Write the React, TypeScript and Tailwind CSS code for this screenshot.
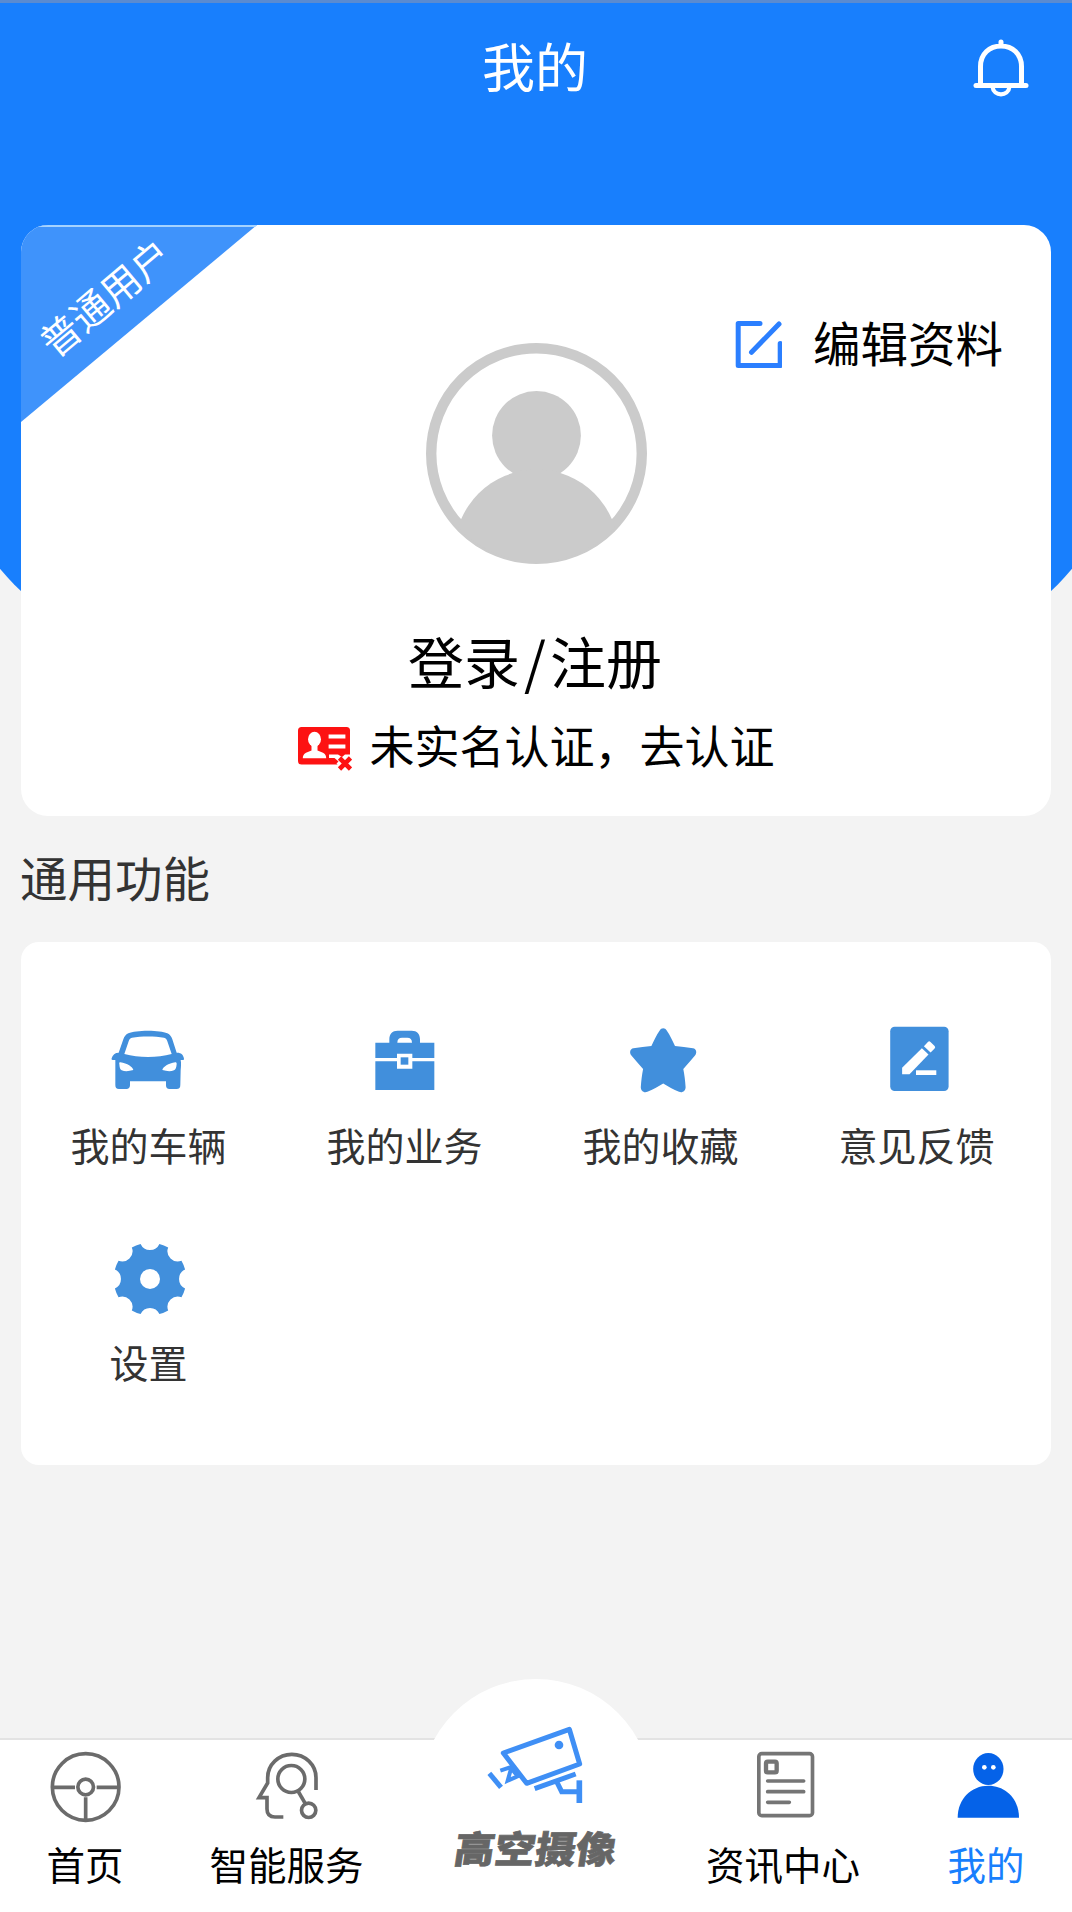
import React from 'react';

const TOOTH_COUNT = 8;

// Gear outline: short outer arcs joined by concave notches
function gearPath(cx: number, cy: number, r: number, notch: number) {
    const point = (deg: number) => {
        const rad = (deg * Math.PI) / 180;
        return `${(cx + r * Math.sin(rad)).toFixed(2)} ${(cy - r * Math.cos(rad)).toFixed(2)}`;
    };
    let d = `M${point(-15)}`;
    for (let i = 0; i < TOOTH_COUNT; i++) {
        const a = i * 45;
        d += ` A${notch} ${notch} 0 0 0 ${point(a + 15)} A${r} ${r} 0 0 1 ${point(a + 30)}`;
    }
    return `${d}Z`;
}

function BellIcon() {
    return (
        <svg className="h-[58px] w-[56px]" viewBox="0 0 56 58" fill="none" stroke="white" strokeWidth="5" strokeLinecap="round">
            <path d="M28 3v4M7.500 46V27.500C7.500 15 16.500 7 28 7s20.500 8 20.500 20.500V46" />
            <path d="M3 46.500h50" />
            <path d="M19.500 47.500c1 10.500 16 10.500 17 0" strokeWidth="4.200" />
        </svg>
    );
}

function EditIcon() {
    return (
        <svg className="h-12 w-[47px]" viewBox="0 0 47 48" fill="none" stroke="#2b7fff" strokeWidth="5" strokeLinecap="round" strokeLinejoin="round">
            <path d="M25 3.500H3.200v42h42V23.500" />
            <path d="M44 4L16.500 32.300" />
        </svg>
    );
}

function Avatar() {
    return (
        <svg className="h-[221px] w-[221px]" viewBox="0 0 221 221">
            <defs>
                <clipPath id="avatar-clip">
                    <circle cx="110.500" cy="110.500" r="108" />
                </clipPath>
            </defs>
            <circle cx="110.500" cy="110.500" r="105.300" fill="none" stroke="#cbcbcb" strokeWidth="10.400" />
            <circle cx="110.500" cy="92.500" r="44.400" fill="#cbcbcb" />
            <circle cx="110.500" cy="208.500" r="82" fill="#cbcbcb" clipPath="url(#avatar-clip)" />
        </svg>
    );
}

function IdCardIcon() {
    return (
        <svg className="h-11 w-[54px]" viewBox="0 0 54 44">
            <rect x="0" y="0" width="52" height="37.500" rx="3.500" fill="#fd1212" />
            <ellipse cx="16.500" cy="12.300" rx="6.500" ry="7.500" fill="white" />
            <path d="M13.500 17h6v6.500l5.500 2.200c2.300 1 3.200 3 3.200 5.600H4.800c0-2.600 1-4.600 3.200-5.600l5.500-2.200z" fill="white" />
            <path d="M30.600 9.500h16.800M30.600 19.500h16.800" stroke="white" strokeWidth="4" />
            <path d="M31 27.500h9l4 2.500 3-2.500h7v12H41l-2.500-3 2-2-4-3.500h-5.500z" fill="white" />
            <path d="M41.500 31l11 11M52.500 31l-11 11" stroke="#fd1212" strokeWidth="4.600" />
        </svg>
    );
}

function CarIcon() {
    return (
        <svg className="h-[72px] w-[72px] overflow-visible" viewBox="159 72 216 216" fill="#418fdc" fillRule="evenodd">
            <path d="M264 92c26 0 46 3 58 8 8 4 12 10 15 18l13 40c12-1 20 5 22 18 0 3-1 4-4 4h-6c2 10 1 20 0 30l-1 44c0 9-3 13-12 13h-20c-8 0-11-4-11-11v-12H210v12c0 7-4 11-11 11h-22c-8 0-11-4-11-12V180h-8c-3 0-4-2-3-5 3-11 10-17 21-17l14-40c3-8 7-14 15-18 12-5 33-8 59-8zM216 113c-6 2-8 5-10 11l-13 38c22 6 46 9 71 9s49-3 71-9l-13-38c-2-6-4-9-10-11-27-5-69-5-96 0zM181 187c-3 0-4 2-3 5 1 11 2 17 7 19 10 4 22 3 35-1-2-9-18-20-39-23zM346 187c3 0 4 2 4 5-1 11-3 17-8 19-10 4-22 3-35-1 2-9 18-20 39-23z" />
        </svg>
    );
}

function BriefcaseIcon() {
    return (
        <svg className="h-[72px] w-[72px] overflow-visible" viewBox="927 72 216 216" fill="#418fdc">
            <path fillRule="evenodd" d="M946 128h42v-10c0-16 9-26 25-26h42c16 0 25 10 25 26v10h43v46h-66v-13h-46v13h-65zM1012 128h44c0-10-5-15-14-15h-16c-9 0-14 5-14 15z" />
            <path d="M946 184h65v22h46v-22h66v86H946z" />
            <rect x="1022" y="172" width="23" height="22" />
        </svg>
    );
}

function StarIcon() {
    return (
        <svg className="h-[72px] w-[72px] overflow-visible" viewBox="0 0 72 72" fill="#418fdc">
            <path d="M34.700 6.500c1.600-3 5.400-3 7 0 3.200 4.700 5.800 9.900 8.300 15.600 5.900.5 11.800 1.300 18 2.200 3.300.6 4.300 4.500 2 7.200-3.800 4.700-7.700 9-11.700 13.500 1.200 5.800 1.900 12 2.300 18.200 0 3.800-3.400 6-6.600 4.500-5.600-2.200-10.700-5-15.800-8.200-5.100 3.200-10.200 6-15.800 8.200-3.200 1.500-6.600-.7-6.600-4.500.4-6.200 1.100-12.400 2.300-18.200-4-4.500-7.900-8.800-11.700-13.500-2.300-2.700-1.300-6.600 2-7.200 6.200-.9 12.100-1.700 18-2.200 2.500-5.700 5.100-10.900 8.300-15.600z" />
        </svg>
    );
}

function FeedbackIcon() {
    return (
        <svg className="h-[72px] w-[72px]" viewBox="0 0 72 72">
            <rect x="9.200" y="2.700" width="58.400" height="64.300" rx="4.500" fill="#418fdc" />
            <path d="M21.100 43.800L40.900 24.200 47.500 30.500 28.500 50.300H21.100z" fill="white" />
            <path d="M42.900 22.200L46.900 18q1.300-1.300 2.600 0L53.600 22q1.200 1.300 0 2.600L49.600 28.600z" fill="white" />
            <rect x="35" y="46.300" width="20.300" height="4.700" fill="white" />
        </svg>
    );
}

function GearIcon() {
    return (
        <svg className="h-[72px] w-[72px] overflow-visible" viewBox="159 723 216 216">
            <path d={gearPath(270, 837, 109, 31)} fill="#418fdc" />
            <circle cx="270" cy="837" r="30" fill="white" />
        </svg>
    );
}

function WheelIcon() {
    return (
        <svg className="h-[72px] w-[72px]" viewBox="147 241 216 216" fill="none" stroke="#6b6b6b" strokeWidth="11">
            <circle cx="257" cy="349" r="100" />
            <circle cx="257" cy="349" r="23.500" />
            <path d="M158 350h67M290 350h67M257 380v69" />
        </svg>
    );
}

function HeadIcon() {
    return (
        <svg className="h-[72px] w-[72px]" viewBox="752 241 216 216" fill="none" stroke="#6b6b6b" strokeWidth="11">
            <path d="M849 439h-25q-24 0-24-24v-34h-24l26-44v-16a72.500 70 0 0 1 145 0v37" />
            <circle cx="873" cy="325" r="40.500" />
            <circle cx="925" cy="419" r="21.500" />
            <path d="M893 361l22 38" />
        </svg>
    );
}

function NewsIcon() {
    return (
        <svg className="h-[72px] w-[72px]" viewBox="201 241 216 216" fill="none" stroke="#757575" strokeWidth="11">
            <rect x="236.500" y="249" width="161" height="186" rx="9" />
            <rect x="258" y="273" width="32" height="32" rx="5" strokeWidth="13" />
            <path d="M263 331h108M263 363h108M263 395h65" strokeLinecap="round" />
        </svg>
    );
}

function MeIcon() {
    return (
        <svg className="h-[72px] w-[72px]" viewBox="810 241 216 216" fill="#0562e8">
            <ellipse cx="925" cy="295" rx="45.500" ry="48" />
            <path d="M833 441c0-56 40-96 92-96s92 40 92 96z" />
            <circle cx="913" cy="290" r="7" fill="white" />
            <circle cx="940" cy="290" r="7" fill="white" />
        </svg>
    );
}

function CameraIcon() {
    return (
        <svg className="h-[80px] w-[100px]" viewBox="258 164 300 240" fill="none" stroke="#3f8ff5" strokeWidth="15">
            <path d="M310 248L508 177l31 104-159 58z" strokeLinejoin="round" />
            <circle cx="477" cy="224" r="13" fill="#3f8ff5" stroke="none" />
            <path d="M404 355l123-44M470 334l15 30h53" />
            <path d="M538 330v68" strokeWidth="17" />
            <path d="M268 309l35 42" />
            <path d="M301 301l30-10 22 27-30 13 10-36" strokeWidth="12" />
        </svg>
    );
}

const features = [
    { label: '我的车辆', icon: <CarIcon /> },
    { label: '我的业务', icon: <BriefcaseIcon /> },
    { label: '我的收藏', icon: <StarIcon /> },
    { label: '意见反馈', icon: <FeedbackIcon /> },
    { label: '设置', icon: <GearIcon /> },
];

interface TabProps {
    label: string;
    icon: React.ReactNode;
    className: string;
}

function Tab({ label, icon, className }: TabProps) {
    return (
        <div className={`flex flex-col items-center pt-[11px] ${className}`}>
            {icon}
            <span className="mt-[20px] text-[38.5px] leading-[40px]">{label}</span>
        </div>
    );
}

function ProfileCard() {
    return (
        <section className="relative mx-[21px] mt-[111px] h-[591px] overflow-hidden rounded-[27px] bg-white">
            {/* Corner ribbon */}
            <div className="absolute left-0 top-0 h-[197px] w-[236px] border-t-2 border-[#a5d3ff] bg-[#3f93fb] [clip-path:polygon(0_0,100%_0,0_100%)]">
                <span className="absolute left-[4px] top-[49px] w-[158px] -rotate-[40deg] text-center text-[39px] leading-[40px] text-white">
                    普通用户
                </span>
            </div>

            <div className="grid grid-cols-[1fr_221px_1fr] items-start pt-[95px]">
                <div className="col-start-2 mt-[23px]">
                    <Avatar />
                </div>
                <div className="flex items-center justify-end gap-[31px] pr-[48px]">
                    <EditIcon />
                    <span className="-mt-1 text-[47.500px] leading-[48px]">编辑资料</span>
                </div>
            </div>

            <div className="mt-[64px] pr-[2px] text-center text-[56px] leading-[64px]">
                登录<span className="mx-1">/</span>注册
            </div>
            <div className="mt-[35px] flex items-center justify-center gap-[17px] pl-px">
                <IdCardIcon />
                <span className="-mt-2 text-[45px] leading-[50px]">未实名认证，去认证</span>
            </div>
        </section>
    );
}

export default function App() {
    return (
        <div className="grid h-[1912px] w-[1072px] overflow-hidden bg-[#f3f3f3] font-['Noto_Sans_CJK_SC',sans-serif] text-black">
            {/* Blue backdrop behind the header and the profile card */}
            <div className="col-start-1 row-start-1 h-[652px] min-w-0 overflow-hidden">
                <div className="-mx-[53px] h-full rounded-b-[230px] border-t-[3px] border-[#5a8bd0] bg-[#187ffd]" />
            </div>

            <div className="relative col-start-1 row-start-1 flex h-[1912px] min-w-0 flex-col">
                <header className="grid h-[114px] grid-cols-[1fr_auto_1fr] items-center pt-[22px]">
                    <h1 className="col-start-2 -mt-[6px] pr-[2px] text-[53px] leading-[60px] text-white">我的</h1>
                    <div className="flex justify-end pr-[43px]">
                        <BellIcon />
                    </div>
                </header>

                <ProfileCard />

                <h2 className="ml-[20px] mt-[33px] text-[47.500px] leading-[56px] text-[#333]">通用功能</h2>

                <section className="mx-[21px] mt-[37px] grid h-[523px] grid-cols-4 content-start gap-y-[75px] rounded-[18px] bg-white pr-[6px] pt-[82px]">
                    {features.map((item) => (
                        <div key={item.label} className="flex h-[142px] flex-col items-center">
                            {item.icon}
                            <span className="mt-[28px] pr-px text-[39px] leading-[40px] text-[#333]">{item.label}</span>
                        </div>
                    ))}
                </section>

                {/* Bottom tab bar */}
                <nav className="mt-auto flex h-[174px] border-t-2 border-[#e3e3e3] bg-white">
                    <Tab label="首页" icon={<WheelIcon />} className="w-[170px]" />
                    <Tab label="智能服务" icon={<HeadIcon />} className="w-[233px]" />
                    <div className="-mt-[61px] flex w-[266px] flex-col items-center">
                        <div className="flex h-[232px] w-[232px] flex-col items-center rounded-full bg-white pt-[46px]">
                            <CameraIcon />
                            <span className="mt-[22px] -skew-x-[8deg] scale-y-[0.92] whitespace-nowrap text-[40.500px] font-black leading-[40px] text-[#666] [-webkit-text-stroke:0.8px_#666]">
                                高空摄像
                            </span>
                        </div>
                    </div>
                    <Tab label="资讯中心" icon={<NewsIcon />} className="w-[228px]" />
                    <Tab label="我的" icon={<MeIcon />} className="w-[175px] pl-[3px] text-[#187ffd]" />
                </nav>
            </div>
        </div>
    );
}
